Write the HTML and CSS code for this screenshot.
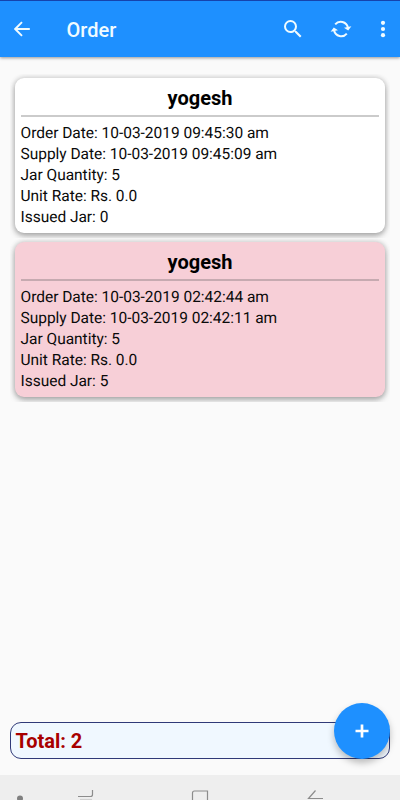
FILE: index.html
```html
<!DOCTYPE html>
<html lang="en">
<head>
<meta charset="utf-8">
<title>Order</title>
<link rel="stylesheet" href="styles.css">
</head>
<body>
<div class="screen">
  <header class="bar">
    <svg class="back" width="16" height="16" viewBox="0 0 16 16"><path d="M15.800 8H1.500M8 1.200L1.200 8L8 14.800" /></svg>
    <h1>Order</h1>
    <svg class="search" width="24" height="24" viewBox="0 0 24 24"><path d="M15.500 14h-.79l-.28-.27A6.470 6.470 0 0 0 16 9.500 6.500 6.500 0 1 0 9.500 16c1.610 0 3.090-.59 4.230-1.570l.27.28v.79l5 4.990L20.490 19l-4.990-5zm-6 0C7.010 14 5 11.990 5 9.500S7.010 5 9.500 5 14 7.010 14 9.500 11.990 14 9.500 14z"/></svg>
    <svg class="sync" width="22" height="20" viewBox="0 0 22 20"><path class="arc" d="M5.200 5.400A7.300 7.300 0 0 1 17.900 8.500M16.800 14.600A7.300 7.300 0 0 1 4.100 11.500"/><path class="tip" d="M14 8.700L21.400 7.200L18.200 11.600zM8 11.300L.6 12.800L3.800 8.400z"/></svg>
    <svg class="more" width="6" height="18" viewBox="0 0 6 18"><circle cx="3" cy="2.800" r="2.100"/><circle cx="3" cy="9" r="2.100"/><circle cx="3" cy="15.200" r="2.100"/></svg>
  </header>
  <main>
    <div class="item">
      <section class="card">
        <h2>yogesh</h2>
        <p>Order Date: 10-03-2019 09:45:30 am</p>
        <p>Supply Date: 10-03-2019 09:45:09 am</p>
        <p>Jar Quantity: 5</p>
        <p>Unit Rate: Rs. 0.0</p>
        <p>Issued Jar: 0</p>
      </section>
    </div>
    <div class="item">
      <section class="card pink">
        <h2>yogesh</h2>
        <p>Order Date: 10-03-2019 02:42:44 am</p>
        <p>Supply Date: 10-03-2019 02:42:11 am</p>
        <p>Jar Quantity: 5</p>
        <p>Unit Rate: Rs. 0.0</p>
        <p>Issued Jar: 5</p>
      </section>
    </div>
  </main>
  <div class="total">Total: 2
    <button class="fab" aria-label="Add"><svg width="14" height="14" viewBox="0 0 14 14"><path d="M7 .5V13.500M.5 7H13.500"/></svg></button>
  </div>
  <footer class="nav">
    <svg width="400" height="25" viewBox="0 0 400 25"><circle cx="20" cy="23.500" r="3"/><path d="M78 21.500H90.500Q92.500 21.500 92.500 19.500V15"/><path class="faint" d="M80 24.500H92"/><path d="M192.500 26V18Q192.500 16 194.500 16H207.500V26"/><path d="M315.500 15.500L308.500 23.500H323"/></svg>
  </footer>
</div>
</body>
</html>
```

FILE: styles.css
```css
* { box-sizing: border-box; }
body { margin: 0; font-family: Roboto, sans-serif; background: #fafafa; color: #0a0a0a; }
h1, h2, p { margin: 0; }
.screen { height: 800px; display: flex; flex-direction: column; overflow: hidden; }
.bar {
  height: 57px; flex: none; display: flex; align-items: center;
  padding: 0 14px; background: #1e90ff; border-top: 1px solid #1543ad;
  box-shadow: 0 1px 3px rgba(0,0,0,.4); color: #f0fbff; fill: #f0fbff;
}
.back { fill: none; stroke: #f0fbff; stroke-width: 1.9; }
.bar h1 { margin-left: 36.5px; padding-top: 1px; font-size: 20px; font-weight: 500; line-height: 26px; }
.search { margin-left: auto; }
.sync { margin-left: 25px; }
.sync .arc { fill: none; stroke: #f0fbff; stroke-width: 2; }
.more { margin-left: 28px; }
main { padding: 17px 10px 0; flex: 1; }
.item { height: 164px; padding: 4px 5px 5px; overflow: hidden; }
.card {
  height: 155px; padding: 7px 6px 0; border-radius: 9px; background: #fff;
  box-shadow: 0 0 5px 1px rgba(0,0,0,.14), 0 3px 6px rgba(0,0,0,.28);
}
.pink { background: #f7cfd7; }
.card h2 {
  height: 32px; margin-bottom: 6px; border-bottom: 2px solid #cbcbcb;
  text-align: center; font-size: 20px; font-weight: 700; line-height: 26px; color: #000;
}
.pink h2 { border-color: #c6aab0; }
.card p { margin-left: -.5px; font-size: 15.5px; line-height: 21.1px; letter-spacing: -.02px; white-space: nowrap; text-rendering: geometricPrecision; }
.total {
  position: relative; flex: none; height: 37px; margin: 0 10px 16px; padding-left: 4.5px;
  border: 1px solid #303a78; border-radius: 11px; background: #f0f8ff;
  color: #a80000; font-size: 20px; font-weight: 700; line-height: 37px;
}
.fab {
  position: absolute; right: -1px; top: -20px; width: 56px; height: 56px; padding: 0;
  display: grid; place-items: center; border: 0; border-radius: 50%; background: #1e90ff;
  box-shadow: 0 4px 7px rgba(0,0,0,.26);
}
.fab path { fill: none; stroke: #fff; stroke-width: 2.7; }
.nav { flex: none; height: 25px; background: #eee; }
.nav svg { display: block; fill: none; stroke: #8c8c8c; stroke-width: 1.2; }
.nav circle { fill: #808080; stroke: none; }
.nav .faint { stroke: #d0d0d0; }
```
